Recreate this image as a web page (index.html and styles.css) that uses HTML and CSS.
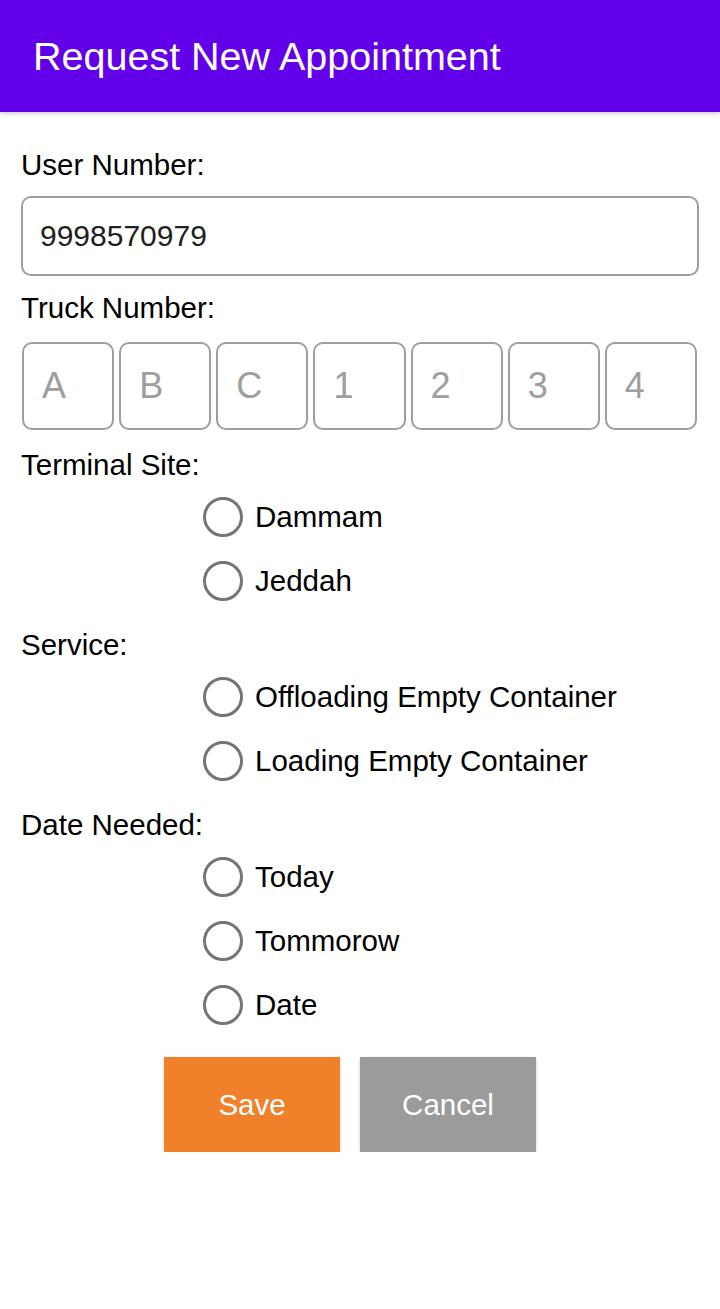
FILE: index.html
```html
<!DOCTYPE html>
<html lang="en">
<head>
    <meta charset="UTF-8">
    <title>Request New Appointment</title>
    <link rel="stylesheet" href="styles.css">
</head>
<body>
<header class="appbar">
    <h1>Request New Appointment</h1>
</header>

<form class="form" id="appointmentForm">
    <label class="field-label" for="userNumber">User Number:</label>
    <input class="text-input" type="text" id="userNumber" name="userNumber" value="9998570979">

    <label class="field-label">Truck Number:</label>
    <div class="truck-row">
        <input class="truck-box" type="text" maxlength="1" placeholder="A">
        <input class="truck-box" type="text" maxlength="1" placeholder="B">
        <input class="truck-box" type="text" maxlength="1" placeholder="C">
        <input class="truck-box" type="text" maxlength="1" placeholder="1">
        <input class="truck-box" type="text" maxlength="1" placeholder="2">
        <input class="truck-box" type="text" maxlength="1" placeholder="3">
        <input class="truck-box" type="text" maxlength="1" placeholder="4">
    </div>

    <div class="field-label section">Terminal Site:</div>
    <div class="radio-group">
        <label class="radio-row"><input type="radio" name="site" value="dammam"><span>Dammam</span></label>
        <label class="radio-row"><input type="radio" name="site" value="jeddah"><span>Jeddah</span></label>
    </div>

    <div class="field-label section">Service:</div>
    <div class="radio-group">
        <label class="radio-row"><input type="radio" name="service" value="offload"><span>Offloading Empty Container</span></label>
        <label class="radio-row"><input type="radio" name="service" value="load"><span>Loading Empty Container</span></label>
    </div>

    <div class="field-label section">Date Needed:</div>
    <div class="radio-group">
        <label class="radio-row"><input type="radio" name="date" value="today"><span>Today</span></label>
        <label class="radio-row"><input type="radio" name="date" value="tomorrow"><span>Tommorow</span></label>
        <label class="radio-row"><input type="radio" name="date" value="date"><span>Date</span></label>
    </div>

    <div class="actions">
        <button type="submit" class="btn btn-save">Save</button>
        <button type="button" class="btn btn-cancel">Cancel</button>
    </div>
</form>
</body>
</html>
```

FILE: styles.css
```css
body {
    margin: 0;
    font-family: "Liberation Sans", Arial, sans-serif;
    background: #fff;
    color: #000;
}
.appbar {
    height: 112px;
    background: #6200ea;
    display: flex;
    align-items: center;
    padding-left: 33px;
    box-shadow: 0 2px 4px rgba(0, 0, 0, 0.18);
}
.appbar h1 {
    margin: 0;
    color: #fff;
    font-size: 39.5px;
    font-weight: normal;
}
.form {
    padding: 0 21px;
    display: flex;
    flex-direction: column;
}
.field-label {
    font-size: 29.5px;
    line-height: 34px;
    margin-top: 15px;
}
.field-label:first-child { margin-top: 36px; }
.field-label.section { margin-top: 15px; }
.truck-row + .field-label.section { margin-top: 18px; }
.text-input {
    box-sizing: border-box;
    height: 80px;
    margin-top: 14px;
    border: 2px solid #9e9e9e;
    border-radius: 10px;
    padding: 0 17px;
    font-family: inherit;
    font-size: 30px;
    color: #212121;
    outline: none;
}
.truck-row {
    display: grid;
    grid-template-columns: repeat(7, 1fr);
    gap: 5px;
    margin: 17px 2px 0 1px;
}
.truck-box {
    box-sizing: border-box;
    width: 100%;
    min-width: 0;
    height: 88px;
    border: 2px solid #9e9e9e;
    border-radius: 10px;
    padding: 0 0 0 18px;
    font-family: inherit;
    font-size: 36px;
    color: #212121;
    outline: none;
}
.truck-box::placeholder { color: #9e9e9e; }
.radio-group {
    display: flex;
    flex-direction: column;
    margin-top: 3px;
    padding-left: 182px;
}
.radio-row {
    height: 64px;
    display: flex;
    align-items: center;
    gap: 12px;
    font-size: 29.5px;
}
.radio-row input {
    appearance: none;
    -webkit-appearance: none;
    margin: 0;
    width: 40px;
    height: 40px;
    box-sizing: border-box;
    border: 3px solid #757575;
    border-radius: 50%;
    flex-shrink: 0;
}
.radio-row input:checked {
    border-color: #6200ea;
    background: radial-gradient(circle, #6200ea 0 9px, transparent 10px);
}
.actions {
    display: flex;
    gap: 20px;
    margin-top: 20px;
    padding-left: 143px;
}
.btn {
    width: 176px;
    height: 95px;
    border: none;
    color: #fff;
    font-family: inherit;
    font-size: 29.5px;
    cursor: pointer;
    box-shadow: 0 1px 3px rgba(0, 0, 0, 0.2);
}
.btn-save { background: #f0802a; }
.btn-cancel { background: #9b9b9b; }
```
